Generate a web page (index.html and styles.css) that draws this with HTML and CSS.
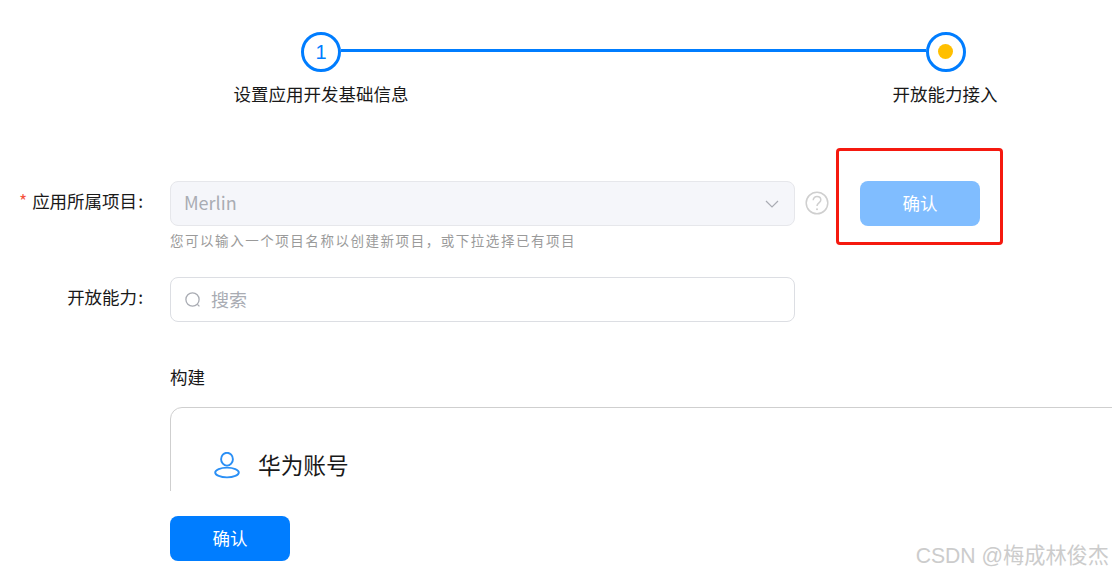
FILE: index.html
```html
<!DOCTYPE html>
<html lang="zh-CN">
<head>
  <meta charset="UTF-8">
  <meta name="viewport" content="width=device-width, initial-scale=1.0">
  <title>开放能力接入</title>
  <link rel="stylesheet" href="styles.css">
</head>
<body>

  <div class="page">
    <!-- Steps -->
    <div class="steps">
      <div class="step-track">
        <div class="step-circle">1</div>
        <div class="step-line"></div>
        <div class="step-circle"><span class="step-dot"></span></div>
      </div>
      <div class="step-labels">
        <span class="step-label">设置应用开发基础信息</span>
        <span class="step-label">开放能力接入</span>
      </div>
    </div>

    <!-- Form -->
    <div class="form-row project-row">
      <label class="form-label"><span class="required">*</span>应用所属项目<span class="colon">:</span></label>
      <div class="field-wrap">
        <div class="field field-disabled">
          <span class="field-value">Merlin</span>
          <svg class="chevron" width="14" height="8" viewBox="0 0 14 8"><path d="M1 1l6 6 6-6" fill="none" stroke="#a9acb3" stroke-width="1.2"/></svg>
        </div>
        <p class="field-hint">您可以输入一个项目名称以创建新项目，或下拉选择已有项目</p>
      </div>
      <svg class="help" width="24" height="24" viewBox="0 0 24 24">
        <circle cx="12" cy="12" r="10.8" fill="none" stroke="#cfcfcf" stroke-width="1.5"/>
        <path d="M8.2 9.2c0-2.2 1.6-3.6 3.8-3.6s3.8 1.4 3.8 3.3c0 2.9-3.8 2.9-3.8 6" fill="none" stroke="#cfcfcf" stroke-width="1.5"/>
        <circle cx="12" cy="18.2" r="1" fill="#cfcfcf"/>
      </svg>
      <div class="confirm-box">
        <button class="btn btn-light">确认</button>
      </div>
    </div>

    <div class="form-row search-row">
      <label class="form-label">开放能力<span class="colon">:</span></label>
      <div class="field">
        <svg class="search-icon" width="18" height="18" viewBox="0 0 18 18">
          <circle cx="8.5" cy="8.5" r="6.6" fill="none" stroke="#a9acb3" stroke-width="1.3"/>
          <path d="M13.4 13.4l2 2" stroke="#a9acb3" stroke-width="1.3"/>
        </svg>
        <span class="field-value search-text">搜索</span>
      </div>
    </div>

    <!-- Capabilities -->
    <div class="group">
      <div class="group-title">构建</div>
      <div class="card-clip">
        <div class="card">
          <svg class="card-icon" width="28" height="28" viewBox="0 0 28 28">
            <ellipse cx="14" cy="7.2" rx="5.9" ry="6.4" fill="none" stroke="#2a8ff5" stroke-width="1.9"/>
            <ellipse cx="14" cy="20.5" rx="11.8" ry="4.9" fill="none" stroke="#2a8ff5" stroke-width="1.9"/>
          </svg>
          <span class="card-title">华为账号</span>
        </div>
      </div>
      <button class="btn btn-primary">确认</button>
    </div>
  </div>

  <div class="watermark">CSDN @梅成林俊杰</div>

</body>
</html>
```

FILE: styles.css
```css
/* Basic layout */
html, body {
  height: 100%;
  margin: 0;
  overflow: hidden;
}

body {
  font-family: "Noto Sans CJK SC", "Liberation Sans", sans-serif;
  background-color: #fff;
  color: #191919;
  font-size: 17.5px;
}

.page {
  position: relative;
  height: 575px;
}

/* Steps */
.steps {
  padding-top: 32px;
}

.step-track {
  display: flex;
  align-items: center;
  margin-left: 301px;
  width: 665px;
}

.step-circle {
  box-sizing: border-box;
  width: 40px;
  height: 40px;
  border: 3px solid #007dff;
  border-radius: 50%;
  display: flex;
  align-items: center;
  justify-content: center;
  color: #007dff;
  font-family: "Liberation Sans", sans-serif;
  font-size: 20px;
  flex: none;
}

.step-line {
  flex: 1;
  height: 3px;
  margin-top: -3px;
  background-color: #007dff;
}

.step-dot {
  width: 15px;
  height: 15px;
  margin: -1px 1px 0 0;
  border-radius: 50%;
  background-color: #ffbf00;
}

.step-labels {
  display: flex;
  justify-content: space-between;
  margin-left: 221px;
  width: 824px;
  margin-top: 8px;
}

.step-label {
  width: 200px;
  text-align: center;
  line-height: 27px;
  white-space: nowrap;
}

/* Form */
.form-row {
  display: flex;
  align-items: flex-start;
}

.project-row {
  margin-top: 74px;
}

.search-row {
  margin-top: 27px;
}

.form-label {
  width: 143px;
  margin-right: 27px;
  text-align: right;
  line-height: 39px;
  white-space: nowrap;
}

.colon {
  margin-left: 1px;
}

.required {
  color: #f5533d;
  margin-right: 5px;
}

.field-wrap {
  width: 625px;
}

.field {
  box-sizing: border-box;
  width: 625px;
  height: 45px;
  display: flex;
  align-items: center;
  padding: 0 14px;
  border: 1px solid #dcdee3;
  border-radius: 8px;
}

.field-disabled {
  background-color: #f5f6fa;
  border-color: #e6e7eb;
  justify-content: space-between;
  padding-left: 13px;
}

.field-value {
  color: #a9acb3;
  font-size: 18px;
  margin-top: -2px;
}

.field-disabled .field-value {
  margin-top: -4px;
}

.chevron {
  margin-right: 1px;
}

.search-icon {
  flex: none;
  margin-left: -1px;
}

.search-text {
  margin-left: 9px;
}

.field-hint {
  margin: 4px 0 0;
  color: #9a9a9a;
  font-size: 13.5px;
  letter-spacing: 1.54px;
  line-height: 20px;
  white-space: nowrap;
}

.help {
  margin: 10px 0 0 10px;
  flex: none;
}

.confirm-box {
  position: absolute;
  left: 836px;
  top: 148px;
  box-sizing: border-box;
  width: 167px;
  height: 97px;
  border: 3px solid #f5190f;
  border-radius: 4px;
  padding: 30px 0 0 21px;
}

/* Buttons */
.btn {
  display: block;
  width: 120px;
  height: 45px;
  border: none;
  border-radius: 8px;
  color: #fff;
  font-family: inherit;
  font-size: 17.5px;
  padding: 0 0 2px;
}

.btn-light {
  background-color: #80bdff;
}

.btn-primary {
  background-color: #007dff;
  margin-top: 25px;
}

/* Capabilities */
.group {
  margin: 42px 0 0 170px;
}

.group-title {
  line-height: 26px;
}

.card-clip {
  height: 84px;
  margin-top: 17px;
  overflow: hidden;
}

.card {
  box-sizing: border-box;
  height: 160px;
  margin-right: -20px;
  padding: 41px 0 0 42px;
  display: flex;
  align-items: flex-start;
  border: 1px solid #cfcfcf;
  border-radius: 12px;
}

.card-icon {
  flex: none;
  margin-top: 3px;
}

.card-title {
  margin-left: 17px;
  font-size: 22.7px;
  line-height: 32px;
}

/* CSDN mark */
.watermark {
  position: absolute;
  right: 3px;
  bottom: 6px;
  color: #cccccc;
  font-family: "Liberation Sans", "Noto Sans CJK SC", sans-serif;
  font-size: 21.2px;
  line-height: 26px;
  white-space: nowrap;
}
```
